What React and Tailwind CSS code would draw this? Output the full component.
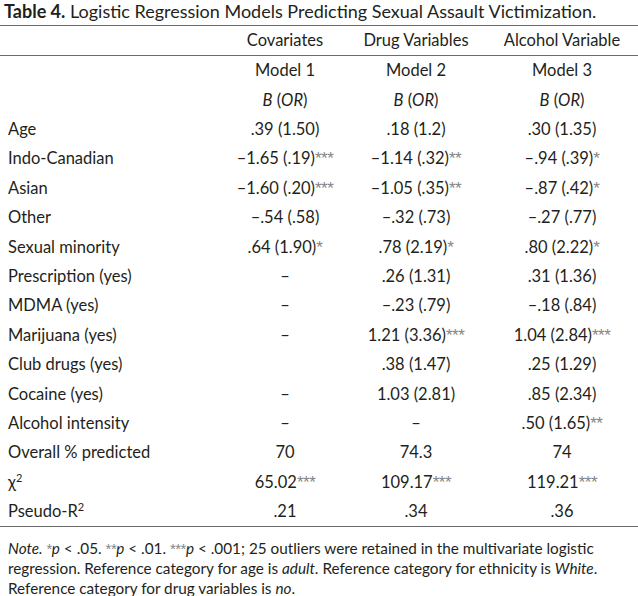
import React from "react";

const ROWS = [
    ["Age", [".39 (1.50)", ""], [".18 (1.2)", ""], [".30 (1.35)", ""]],
    ["Indo-Canadian", ["–1.65 (.19)", "***"], ["–1.14 (.32)", "**"], ["–.94 (.39)", "*"]],
    ["Asian", ["–1.60 (.20)", "***"], ["–1.05 (.35)", "**"], ["–.87 (.42)", "*"]],
    ["Other", ["–.54 (.58)", ""], ["–.32 (.73)", ""], ["–.27 (.77)", ""]],
    ["Sexual minority", [".64 (1.90)", "*"], [".78 (2.19)", "*"], [".80 (2.22)", "*"]],
    ["Prescription (yes)", ["–", ""], [".26 (1.31)", ""], [".31 (1.36)", ""]],
    ["MDMA (yes)", ["–", ""], ["–.23 (.79)", ""], ["–.18 (.84)", ""]],
    ["Marijuana (yes)", ["–", ""], ["1.21 (3.36)", "***"], ["1.04 (2.84)", "***"]],
    ["Club drugs (yes)", ["", ""], [".38 (1.47)", ""], [".25 (1.29)", ""]],
    ["Cocaine (yes)", ["–", ""], ["1.03 (2.81)", ""], [".85 (2.34)", ""]],
    ["Alcohol intensity", ["–", ""], ["–", ""], [".50 (1.65)", "**"]],
    ["Overall % predicted", ["70", ""], ["74.3", ""], ["74", ""]],
    ["chi", ["65.02", "***"], ["109.17", "***"], ["119.21", "***"]],
    ["pseudo", [".21", ""], [".34", ""], [".36", ""]],
];

const GRID = "grid grid-cols-[224px_122px_140px_152px] items-center";

// significance stars, grey and set high like the printed table
function Stars({ s, small }) {
    return (
        <span
            className={`font-['Liberation_Sans',_sans-serif] leading-none text-[#858585] tracking-[-0.5px] ${
                small ? "text-[15px]" : "text-[17px]"
            }`}
        >
            {s}
        </span>
    );
}

function Cell({ v }) {
    return (
        <div className="text-center whitespace-nowrap">
            {v[0]}
            {v[1] && <Stars s={v[1]} />}
        </div>
    );
}

function Sq() {
    return <span className="relative -top-[6px] text-[11px] leading-none">2</span>;
}

function Label({ name }) {
    if (name === "chi") {
        return (
            <div className="pl-2">
                χ<Sq />
            </div>
        );
    }
    if (name === "pseudo") {
        return (
            <div className="pl-2">
                Pseudo-R<Sq />
            </div>
        );
    }
    return <div className="pl-2">{name}</div>;
}

export default function App() {
    return (
        <div className="w-[638px] h-[596px] bg-white text-[#231f20] font-['Lato',_'Open_Sans',_sans-serif] text-[16.5px]">
            <div className="pl-1 h-[25px] text-[18px] leading-[22px] whitespace-nowrap">
                <span className="font-bold">Table 4.</span> Logistic Regression Models Predicting Sexual Assault Victimization.
            </div>

            {/* header */}
            <div className="border-t-[1.5px] border-b border-[#6b6b6b]">
                <div className={`${GRID} h-[29px]`}>
                    <div />
                    <div className="text-center">Covariates</div>
                    <div className="text-center">Drug Variables</div>
                    <div className="text-center">Alcohol Variable</div>
                </div>
            </div>

            <div className="border-b-[1.5px] border-[#6b6b6b]">
                <div className={`${GRID} h-[29.4px]`}>
                    <div />
                    <div className="text-center">Model 1</div>
                    <div className="text-center">Model 2</div>
                    <div className="text-center">Model 3</div>
                </div>
                <div className={`${GRID} h-[29.4px]`}>
                    <div />
                    {[0, 1, 2].map((i) => (
                        <div key={i} className="text-center">
                            <i>B</i> (<i>OR</i>)
                        </div>
                    ))}
                </div>
                {ROWS.map((r) => (
                    <div key={r[0]} className={`${GRID} h-[29.4px]`}>
                        <Label name={r[0]} />
                        <Cell v={r[1]} />
                        <Cell v={r[2]} />
                        <Cell v={r[3]} />
                    </div>
                ))}
            </div>

            <p className="pl-2 pt-[11px] text-[15.3px] leading-[20px] whitespace-nowrap">
                <i>Note.</i> <Stars s="*" small />
                <i>p</i> &lt; .05. <Stars s="**" small />
                <i>p</i> &lt; .01. <Stars s="***" small />
                <i>p</i> &lt; .001; 25 outliers were retained in the multivariate logistic
                <br />
                regression. Reference category for age is <i>adult</i>. Reference category for ethnicity is <i>White</i>.
                <br />
                Reference category for drug variables is <i>no</i>.
            </p>
        </div>
    );
}
